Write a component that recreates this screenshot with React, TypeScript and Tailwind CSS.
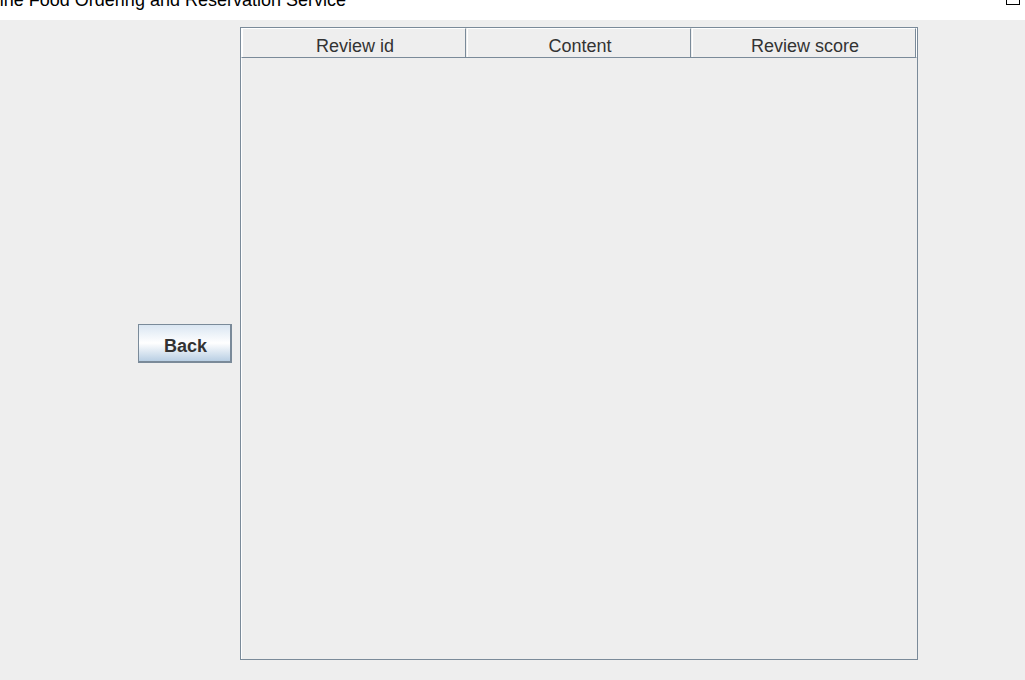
import React from "react";

const columns = ["Review id", "Content", "Review score"];

const App = () => {
  return (
    <div
      className="w-[1025px] h-[680px] bg-[#eeeeee] overflow-hidden"
      style={{ fontFamily: '"Liberation Sans", Arial, sans-serif' }}
    >
      {/* Window title bar */}
      <div className="relative h-5 bg-white overflow-hidden">
        <div className="flex justify-end w-[346px] -mt-[9px] text-[18px] leading-[18px] text-black whitespace-nowrap">
          Online Food Ordering and Reservation Service
        </div>
        <div className="absolute left-[1006px] top-[-8px] w-[14px] h-[13px] border border-black bg-white" />
      </div>

      {/* Content */}
      <div className="flex items-center gap-2 pl-[138px] pt-[7px]">
        <button className="flex items-center justify-center w-[94px] h-[39px] pt-[6px] pl-[2px] border border-r-2 border-b-2 border-[#7a8a99] bg-gradient-to-b from-[#dae6f2] via-white to-[#b9cfe4] text-[18px] font-bold text-[#333333]">
          Back
        </button>

        <div className="w-[678px] h-[633px] border border-[#7a8a99] flex flex-col">
          <div className="flex h-[30px] border-l border-r border-white gap-px border-b border-b-[#7a8a99]">
            {columns.map((col) => (
              <div
                key={col}
                className="w-[224px] h-[29px] border-t border-l border-white border-r border-r-[#7a8a99] flex justify-center pt-[7px] pl-[2px] text-[18px] leading-[20px] text-[#333333]"
              >
                {col}
              </div>
            ))}
          </div>
          <div className="flex-1 border-l border-white" />
        </div>
      </div>
    </div>
  );
};

export default App;
